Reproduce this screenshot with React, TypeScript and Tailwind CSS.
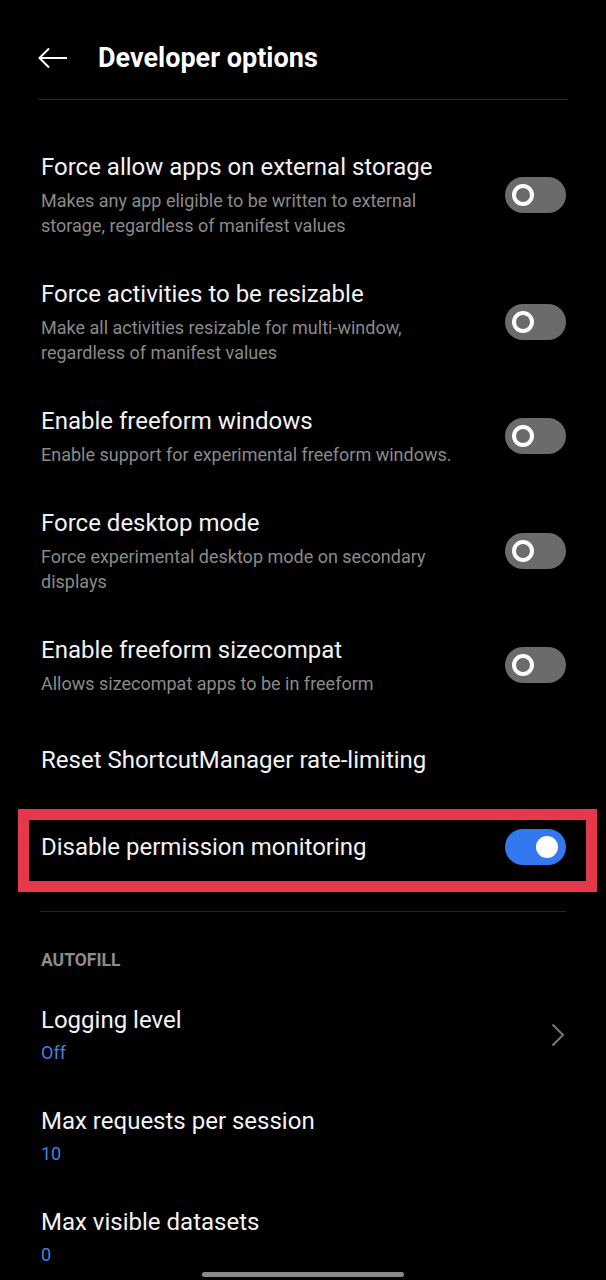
import React from "react";

function Toggle({ on }: { on?: boolean }) {
  if (on) {
    return (
      <div className="w-[61px] h-[36px] rounded-full bg-[#3478f0] flex items-center justify-end pr-[8px] shrink-0">
        <div className="w-[22px] h-[22px] rounded-full bg-white" />
      </div>
    );
  }
  return (
    <div className="w-[61px] h-[36px] rounded-full bg-[#6b6b6b] flex items-center pl-[7px] shrink-0">
      <div className="w-[22px] h-[22px] rounded-full border-[4px] border-white bg-[#6b6b6b]" />
    </div>
  );
}

function Row({
  title,
  sub,
  toggle,
  on,
  value,
  chevron,
}: {
  title: string;
  sub?: string;
  toggle?: boolean;
  on?: boolean;
  value?: string;
  chevron?: boolean;
}) {
  return (
    <div className="flex items-center justify-between pl-[41px] pr-[40px] py-5 min-h-[87px]">
      <div className="w-[428px]">
        <div className="text-[24px] leading-[32px] text-[#f2f2f2]">{title}</div>
        {sub && (
          <div className="mt-[5px] text-[18px] leading-[25px] text-[#8a8a8a]">{sub}</div>
        )}
        {value && (
          <div className="mt-[4px] text-[18px] leading-[25px] text-[#4a7ee6]">{value}</div>
        )}
      </div>
      {toggle && <Toggle on={on} />}
      {chevron && (
        <svg width="14" height="24" viewBox="0 0 14 24" className="mr-[1px]">
          <polyline points="1.5,1.5 12,12 1.5,22.5" fill="none" stroke="#777777" strokeWidth="2" />
        </svg>
      )}
    </div>
  );
}

export default function App() {
  return (
    <div
      className="relative w-full h-[1280px] overflow-hidden bg-black"
      style={{ fontFamily: "Roboto, 'Noto Sans', sans-serif" }}
    >
      <div className="mx-[38px] h-[100px] pt-4 flex items-center border-b border-[#2a2a2a]">
        <svg width="30" height="22" viewBox="0 0 30 22" className="shrink-0">
          <line x1="1.5" y1="11" x2="29" y2="11" stroke="#ffffff" strokeWidth="2" />
          <polyline points="11,1.5 1.5,11 11,20.5" fill="none" stroke="#ffffff" strokeWidth="2" />
        </svg>
        <div className="ml-[30px] text-[27px] font-bold text-white leading-[32px]">Developer options</div>
      </div>

      <div className="pt-[31px]">
        <Row
          title="Force allow apps on external storage"
          sub="Makes any app eligible to be written to external storage, regardless of manifest values"
          toggle
        />
        <Row
          title="Force activities to be resizable"
          sub="Make all activities resizable for multi-window, regardless of manifest values"
          toggle
        />
        <Row
          title="Enable freeform windows"
          sub="Enable support for experimental freeform windows."
          toggle
        />
        <Row
          title="Force desktop mode"
          sub="Force experimental desktop mode on secondary displays"
          toggle
        />
        <Row
          title="Enable freeform sizecompat"
          sub="Allows sizecompat apps to be in freeform"
          toggle
        />
        <Row title="Reset ShortcutManager rate-limiting" />
        <div className="relative">
          <Row title="Disable permission monitoring" toggle on />
          <div className="absolute left-[18px] right-[9px] top-[6px] bottom-[-2px] border-[11px] border-[#e5384b]" />
        </div>

        <div className="mx-[40px] mt-[21px] border-t border-[#262626]" />

        <div className="pl-[41px] pt-[38px] pb-[14px] text-[17.5px] leading-[20px] font-bold text-[#8c8c8c]">
          AUTOFILL
        </div>

        <Row title="Logging level" value="Off" chevron />
        <Row title="Max requests per session" value="10" />
        <Row title="Max visible datasets" value="0" />
      </div>

      <div className="absolute left-[202px] bottom-[3px] w-[202px] h-[5px] rounded-full bg-[#8a8a8a]" />
    </div>
  );
}
